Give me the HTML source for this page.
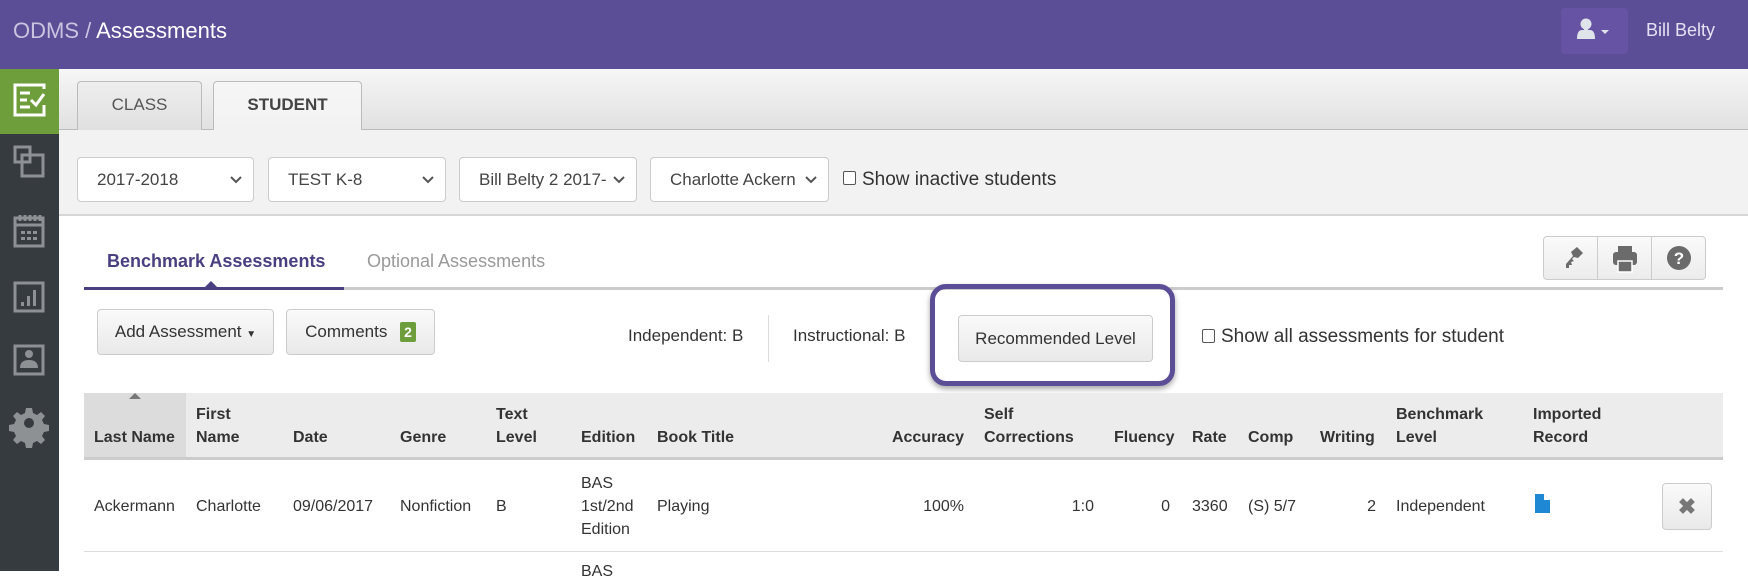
<!DOCTYPE html>
<html><head><meta charset="utf-8"><style>
*{box-sizing:border-box;margin:0;padding:0}
body{width:1748px;height:571px;overflow:hidden;background:#fff;font-family:"Liberation Sans",sans-serif;color:#333;position:relative}
.a{position:absolute}
.hdr{left:0;top:0;width:1748px;height:69px;background:#5b4e96}
.side{left:0;top:69px;width:59px;height:502px;background:#363b3f}
.tabbar{left:59px;top:69px;width:1689px;height:61px;background:linear-gradient(#f6f6f6,#e1e1e1);border-bottom:1px solid #bbb}
.tab{top:81px;height:49px;border:1px solid #bbb;border-bottom:none;border-radius:4px 4px 0 0;font-size:17px;text-align:center;line-height:46px}
.filt{left:59px;top:130px;width:1689px;height:86px;background:#f2f2f2;border-bottom:2px solid #d6d6d6}
.sel{top:157px;height:45px;background:#fff;border:1px solid #ccc;border-radius:4px;font-size:17px;line-height:43px;padding-left:19px;color:#444}
.sel svg{position:absolute;right:10px;top:17px}
.btn{background:linear-gradient(#fafafa,#e9e9e9);border:1px solid #ccc;border-radius:4px;font-size:17px;text-align:center;color:#333}
.th{font-weight:bold;font-size:16px;color:#333;line-height:23px}
.td{font-size:16px;color:#333;line-height:23px}
</style></head><body>
<div class="a hdr"></div>
<div class="a" style="left:13px;top:18px;font-size:22px;color:#c9c4e0">ODMS / <span style="color:#fff">Assessments</span></div>
<div class="a" style="left:1561px;top:8px;width:67px;height:46px;background:#6753a3;border-radius:4px"></div>
<svg class="a" style="left:1575px;top:18px" width="40" height="24"><circle cx="11" cy="6" r="5.5" fill="#dfe3ea"/><path d="M2 21 Q2 12 7 12 L15 12 Q20 12 20 21 Z" fill="#dfe3ea"/><rect x="9" y="10" width="4" height="4" fill="#dfe3ea"/><path d="M26 12 L34 12 L30 16 Z" fill="#dfe3ea"/></svg>
<div class="a" style="left:1646px;top:20px;font-size:18px;color:#e4e2f2">Bill Belty</div>

<div class="a side"></div>
<div class="a" style="left:0;top:69px;width:59px;height:65px;background:#6e9e3c"></div>
<svg class="a" style="left:0;top:69px" width="59" height="400" fill="none">
 <g stroke="#fff" stroke-width="3"><path d="M44 20 V16 H15 V46 H44 V36"/><path d="M20 24 H30 M20 31 H27 M20 38 H30"/><path d="M31 31 L36 36 L44 25"/></g>
 <g stroke="#8d9194" stroke-width="3"><rect x="15" y="78" width="15" height="15"/><rect x="22" y="86" width="21" height="21"/>
 <rect x="15" y="149" width="28" height="28"/><path d="M15 156 H43"/><path d="M20 146 V152 M25 146 V152 M30 146 V152 M35 146 V152 M40 146 V152"/>
 <rect x="15" y="214" width="28" height="28"/>
 <rect x="15" y="277" width="28" height="28"/></g>
 <g fill="#8d9194"><rect x="21" y="162" width="4" height="3"/><rect x="27" y="162" width="4" height="3"/><rect x="33" y="162" width="4" height="3"/><rect x="21" y="168" width="4" height="3"/><rect x="27" y="168" width="4" height="3"/><rect x="33" y="168" width="4" height="3"/>
 <rect x="21" y="233" width="3" height="4"/><rect x="27" y="227" width="3" height="10"/><rect x="33" y="221" width="3" height="16"/>
 <circle cx="29" cy="285" r="4"/><path d="M20 299 Q20 291 29 291 Q38 291 38 299 Z"/>
 <path d="M26 339h6l1 5 4 2 4-3 4 4-3 4 2 4 5 1v6l-5 1-2 4 3 4-4 4-4-3-4 2-1 5h-6l-1-5-4-2-4 3-4-4 3-4-2-4-5-1v-6l5-1 2-4-3-4 4-4 4 3 4-2z"/></g>
 <circle cx="29" cy="354" r="5" fill="#363b3f"/>
</svg>

<div class="a tabbar"></div>
<div class="a tab" style="left:77px;width:125px;background:linear-gradient(#eee,#e0e0e0);color:#555">CLASS</div>
<div class="a tab" style="left:213px;width:149px;height:50px;background:linear-gradient(#f6f6f6,#f2f2f2);font-weight:bold;color:#444">STUDENT</div>
<div class="a filt"></div>
<div class="a sel" style="left:77px;width:177px">2017-2018<svg width="14" height="10"><path d="M2 2l5 5 5-5" stroke="#555" stroke-width="2" fill="none"/></svg></div>
<div class="a sel" style="left:268px;width:178px">TEST K-8<svg width="14" height="10"><path d="M2 2l5 5 5-5" stroke="#555" stroke-width="2" fill="none"/></svg></div>
<div class="a sel" style="left:459px;width:178px">Bill Belty 2 2017-<svg width="14" height="10"><path d="M2 2l5 5 5-5" stroke="#555" stroke-width="2" fill="none"/></svg></div>
<div class="a sel" style="left:650px;width:179px">Charlotte Ackern<svg width="14" height="10"><path d="M2 2l5 5 5-5" stroke="#555" stroke-width="2" fill="none"/></svg></div>
<div class="a" style="left:843px;top:171px;width:13px;height:14px;border:1px solid #555;border-radius:2px;background:#fff"></div>
<div class="a" style="left:862px;top:169px;font-size:19px;color:#333">Show inactive students</div>

<div class="a" style="left:107px;top:251px;font-size:18px;font-weight:bold;color:#4a3f80">Benchmark Assessments</div>
<div class="a" style="left:367px;top:251px;font-size:18px;color:#999">Optional Assessments</div>
<div class="a" style="left:84px;top:287px;width:1639px;height:3px;background:#ccc"></div>
<div class="a" style="left:84px;top:287px;width:260px;height:3px;background:#4a3f80"></div>
<div class="a" style="left:205px;top:281px;width:0;height:0;border-left:6px solid transparent;border-right:6px solid transparent;border-bottom:6px solid #4a3f80"></div>

<div class="a" style="left:1543px;top:236px;width:163px;height:44px;border:1px solid #ccc;border-radius:4px;background:linear-gradient(#fafafa,#ececec)"></div>
<div class="a" style="left:1597px;top:237px;width:1px;height:42px;background:#ccc"></div>
<div class="a" style="left:1651px;top:237px;width:1px;height:42px;background:#ccc"></div>
<svg class="a" style="left:1543px;top:236px" width="163" height="44">
 <path d="M23 28 L30 20 L28 16 L34 11 L40 17 L35 22 L31 21 L29 23 L31 25 L28 26 L29 29 L26 29 L26 32 L23 32 Z" fill="#6b6b6b"/>
 <rect x="75" y="10" width="14" height="6" fill="#6b6b6b"/><rect x="70" y="16" width="24" height="13" rx="3" fill="#6b6b6b"/><rect x="75" y="25" width="14" height="11" fill="#6b6b6b" stroke="#fff" stroke-width="1.5"/>
 <circle cx="136" cy="22" r="12" fill="#6b6b6b"/><text x="136" y="28" font-size="17" font-weight="bold" fill="#fff" text-anchor="middle" font-family="Liberation Sans">?</text>
</svg>

<div class="a btn" style="left:97px;top:309px;width:177px;height:46px;line-height:44px">Add Assessment <span style="font-size:10px">&#9660;</span></div>
<div class="a btn" style="left:286px;top:309px;width:149px;height:46px;line-height:44px">Comments <span style="display:inline-block;background:#6e9e3c;color:#fff;font-size:14px;font-weight:bold;line-height:20px;padding:0 4px;border-radius:2px;margin-left:8px">2</span></div>
<div class="a" style="left:628px;top:326px;font-size:17px">Independent: B</div>
<div class="a" style="left:768px;top:315px;width:1px;height:47px;background:#ddd"></div>
<div class="a" style="left:793px;top:326px;font-size:17px">Instructional: B</div>
<div class="a" style="left:930px;top:284px;width:245px;height:102px;border:5px solid #5b4e96;border-radius:16px;box-shadow:0 3px 6px rgba(0,0,0,.35)"></div>
<div class="a btn" style="left:958px;top:315px;width:195px;height:47px;line-height:45px">Recommended Level</div>
<div class="a" style="left:1202px;top:329px;width:13px;height:14px;border:1px solid #555;border-radius:2px;background:#fff"></div>
<div class="a" style="left:1221px;top:326px;font-size:19px">Show all assessments for student</div>

<div class="a" style="left:84px;top:393px;width:1639px;height:67px;background:#ececec;border-bottom:3px solid #ccc"></div>
<div class="a" style="left:84px;top:393px;width:102px;height:64px;background:#dcdcdc"></div>
<div class="a" style="left:129px;top:393px;width:0;height:0;border-left:6px solid transparent;border-right:6px solid transparent;border-bottom:6px solid #777"></div>
<div class="a th" style="left:94px;top:426px">Last Name</div>
<div class="a th" style="left:196px;top:403px">First<br>Name</div>
<div class="a th" style="left:293px;top:426px">Date</div>
<div class="a th" style="left:400px;top:426px">Genre</div>
<div class="a th" style="left:496px;top:403px">Text<br>Level</div>
<div class="a th" style="left:581px;top:426px">Edition</div>
<div class="a th" style="left:657px;top:426px">Book Title</div>
<div class="a th" style="left:864px;top:426px;width:100px;text-align:right">Accuracy</div>
<div class="a th" style="left:984px;top:403px">Self<br>Corrections</div>
<div class="a th" style="left:1114px;top:426px">Fluency</div>
<div class="a th" style="left:1192px;top:426px">Rate</div>
<div class="a th" style="left:1248px;top:426px">Comp</div>
<div class="a th" style="left:1320px;top:426px">Writing</div>
<div class="a th" style="left:1396px;top:403px">Benchmark<br>Level</div>
<div class="a th" style="left:1533px;top:403px">Imported<br>Record</div>

<div class="a td" style="left:94px;top:495px">Ackermann</div>
<div class="a td" style="left:196px;top:495px">Charlotte</div>
<div class="a td" style="left:293px;top:495px">09/06/2017</div>
<div class="a td" style="left:400px;top:495px">Nonfiction</div>
<div class="a td" style="left:496px;top:495px">B</div>
<div class="a td" style="left:581px;top:472px">BAS<br>1st/2nd<br>Edition</div>
<div class="a td" style="left:657px;top:495px">Playing</div>
<div class="a td" style="left:864px;top:495px;width:100px;text-align:right">100%</div>
<div class="a td" style="left:994px;top:495px;width:100px;text-align:right">1:0</div>
<div class="a td" style="left:1070px;top:495px;width:100px;text-align:right">0</div>
<div class="a td" style="left:1192px;top:495px">3360</div>
<div class="a td" style="left:1248px;top:495px">(S) 5/7</div>
<div class="a td" style="left:1276px;top:495px;width:100px;text-align:right">2</div>
<div class="a td" style="left:1396px;top:495px">Independent</div>
<svg class="a" style="left:1535px;top:494px" width="16" height="20"><path d="M0 0H9L15 6V19H0Z" fill="#1e88d4"/><path d="M9 0V6H15" fill="#fff"/></svg>
<div class="a btn" style="left:1662px;top:483px;width:50px;height:47px;line-height:45px;font-size:22px;font-weight:bold;color:#777">&#10006;</div>
<div class="a" style="left:84px;top:551px;width:1639px;height:1px;background:#ddd"></div>
<div class="a td" style="left:581px;top:560px">BAS</div>
</body></html>
